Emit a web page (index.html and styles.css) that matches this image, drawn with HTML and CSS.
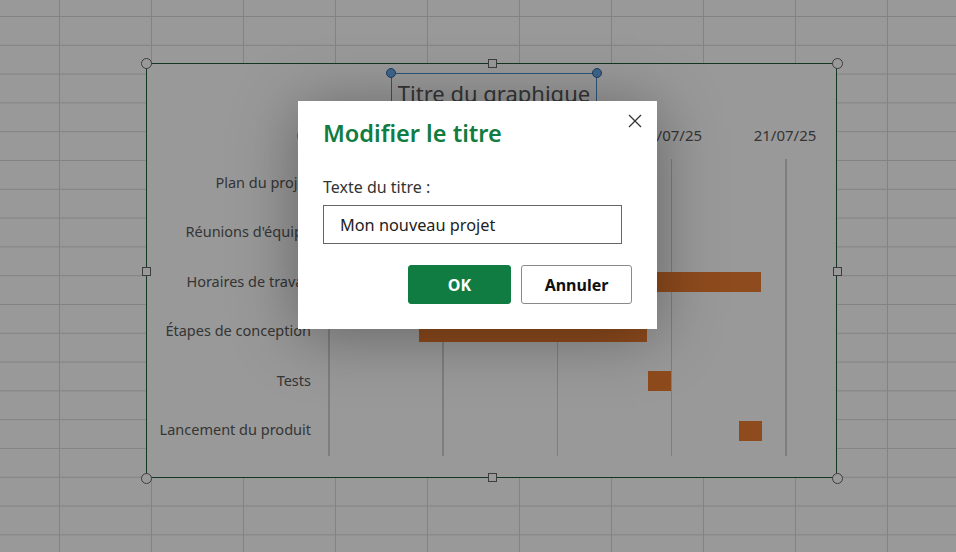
FILE: index.html
```html
<!DOCTYPE html>
<html lang="fr">
<head>
<meta charset="utf-8">
<title>Modifier le titre</title>
<link rel="stylesheet" href="styles.css">
</head>
<body>
<div class="sheet">
  <div class="chart">
    <div class="title-wrap">
      <div class="title-box">Titre du graphique
        <span class="bh bh-tl"></span><span class="bh bh-tr"></span>
      </div>
    </div>
    <div class="axis">
      <span class="date" style="left:0%">01/07/25</span>
      <span class="date" style="left:75%">16/07/25</span>
      <span class="date" style="left:100%">21/07/25</span>
    </div>
    <div class="body">
      <div class="cats">
        <div class="cat">Plan du projet</div>
        <div class="cat">Réunions d'équipe</div>
        <div class="cat">Horaires de travail</div>
        <div class="cat">Étapes de conception</div>
        <div class="cat">Tests</div>
        <div class="cat">Lancement du produit</div>
      </div>
      <div class="plot">
        <div class="gl" style="left:0%"></div>
        <div class="gl" style="left:25%"></div>
        <div class="gl" style="left:50%"></div>
        <div class="gl" style="left:75%"></div>
        <div class="gl" style="left:100%"></div>
        <div class="row"></div>
        <div class="row"></div>
        <div class="row"><span class="bar" style="left:45%;width:49.8%"></span></div>
        <div class="row"><span class="bar" style="left:19.9%;width:50%"></span></div>
        <div class="row"><span class="bar" style="left:70.1%;width:5%"></span></div>
        <div class="row"><span class="bar" style="left:89.9%;width:5%"></span></div>
      </div>
    </div>
    <span class="h c tl"></span><span class="h c tr"></span>
    <span class="h c bl"></span><span class="h c br"></span>
    <span class="h s tm"></span><span class="h s bm"></span>
    <span class="h s ml"></span><span class="h s mr"></span>
  </div>
</div>
<div class="overlay"></div>
<div class="dialog" role="dialog">
  <button class="close" aria-label="Fermer">
    <svg width="14" height="14" viewBox="0 0 14 14"><path d="M1 1L13 13M13 1L1 13" stroke="#333" stroke-width="1.3" fill="none"/></svg>
  </button>
  <h2 class="dlg-title">Modifier le titre</h2>
  <label class="dlg-label">Texte du titre :</label>
  <div class="dlg-input">Mon nouveau projet</div>
  <div class="dlg-actions">
    <button class="btn btn-ok">OK</button>
    <button class="btn btn-cancel">Annuler</button>
  </div>
</div>
</body>
</html>
```
FILE: styles.css
```css
html, body {
  margin: 0;
  padding: 0;
}
body {
  width: 956px;
  height: 552px;
  overflow: hidden;
  position: relative;
  font-family: "Noto Sans", "Open Sans", sans-serif;
}
.sheet {
  position: absolute;
  inset: 0;
  background-color: #fff;
  background-image:
    linear-gradient(to right, #dadada 1px, transparent 1px),
    linear-gradient(to bottom, #dadada 1px, transparent 1px);
  background-size: 92px 28.8px;
  background-position: 59px 16px;
}
.chart {
  position: absolute;
  left: 146px;
  top: 63px;
  width: 691px;
  height: 415px;
  box-sizing: border-box;
  border: 1.5px solid #1f5a37;
  background: #fff;
  color: #595959;
}
.title-wrap {
  display: flex;
  justify-content: center;
  padding-top: 9px;
}
.title-box {
  position: relative;
  margin-left: 5px;
  border: 1.5px solid #4a8fd0;
  padding: 4px 6px 2px;
  font-size: 22px;
  line-height: 30px;
  color: #595959;
  white-space: nowrap;
}
.bh {
  position: absolute;
  top: -6px;
  width: 8px;
  height: 8px;
  border-radius: 50%;
  background: #6aa8e6;
  border: 1.5px solid #2f6aa6;
}
.bh-tl { left: -6px; }
.bh-tr { right: -6px; }
.axis {
  position: relative;
  margin: 11px 51px 0 181px;
  height: 26px;
}
.date {
  position: absolute;
  top: 0;
  transform: translateX(-50%);
  font-size: 15px;
  line-height: 26px;
  white-space: nowrap;
}
.body {
  display: flex;
  margin-top: 11px;
}
.cats {
  width: 164px;
  display: flex;
  flex-direction: column;
}
.cat {
  height: 49.5px;
  display: flex;
  align-items: center;
  justify-content: flex-end;
  font-size: 14.5px;
  white-space: nowrap;
  margin-top: -2px;
  margin-bottom: 2px;
}
.plot {
  position: relative;
  margin-left: 17px;
  width: 457px;
  height: 297px;
  display: flex;
  flex-direction: column;
}
.gl {
  position: absolute;
  top: 0;
  bottom: 0;
  width: 1.5px;
  background: #d2d2d2;
}
.row {
  position: relative;
  height: 49.5px;
}
.bar {
  position: absolute;
  top: 14px;
  height: 20px;
  background: #ed7d31;
}
.h {
  position: absolute;
  box-sizing: border-box;
  background: #fff;
  border: 1.5px solid #666;
}
.c {
  width: 11px;
  height: 11px;
  border-radius: 50%;
}
.s {
  width: 9px;
  height: 9px;
}
.tl { left: -6.5px; top: -6.5px; }
.tr { right: -6.5px; top: -6.5px; }
.bl { left: -6.5px; bottom: -6.5px; }
.br { right: -6.5px; bottom: -6.5px; }
.tm { left: 341px; top: -5px; }
.bm { left: 341px; bottom: -5px; }
.ml { left: -5.5px; top: 203px; }
.mr { right: -5.5px; top: 203px; }
.overlay {
  position: absolute;
  inset: 0;
  background: rgba(0, 0, 0, 0.4);
}
.dialog {
  position: absolute;
  left: 298px;
  top: 101px;
  width: 359px;
  height: 228px;
  box-sizing: border-box;
  background: #fff;
  padding: 16px 25px 25px;
  display: flex;
  flex-direction: column;
  box-shadow: 0 6px 60px rgba(0, 0, 0, 0.35);
}
.close {
  position: absolute;
  right: 14px;
  top: 12px;
  width: 16px;
  height: 16px;
  padding: 0;
  border: 0;
  background: none;
  display: flex;
  align-items: center;
  justify-content: center;
}
.dlg-title {
  margin: 0;
  font-size: 23.5px;
  line-height: 32px;
  font-weight: 600;
  color: #107c41;
}
.dlg-label {
  margin-top: 27px;
  font-size: 16px;
  line-height: 22px;
  color: #333;
}
.dlg-input {
  margin-top: 7px;
  width: 299px;
  height: 39px;
  box-sizing: border-box;
  border: 1px solid #666;
  padding: 0 16px;
  display: flex;
  align-items: center;
  font-size: 16.3px;
  color: #222;
}
.dlg-actions {
  margin-top: auto;
  display: flex;
  justify-content: flex-end;
  gap: 10px;
}
.btn {
  height: 39px;
  box-sizing: border-box;
  border-radius: 3px;
  font-family: inherit;
  font-size: 16px;
  font-weight: 700;
  padding: 0;
}
.btn-ok {
  width: 103px;
  border: 1px solid #107c41;
  background: #107c41;
  color: #fff;
}
.btn-cancel {
  width: 111px;
  border: 1px solid #8a8a8a;
  background: #fff;
  color: #111;
}
```
